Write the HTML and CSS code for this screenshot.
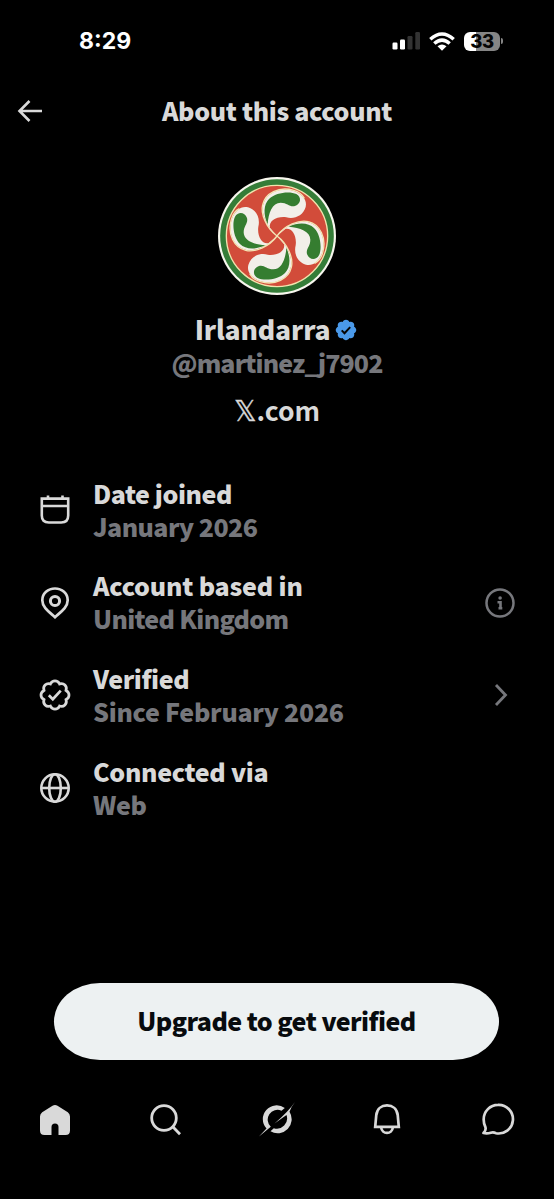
FILE: index.html
```html
<!DOCTYPE html>
<html lang="en">
<head>
<meta charset="utf-8">
<title>About this account</title>
<link rel="stylesheet" href="styles.css">
</head>
<body>
<div class="screen">
  <div class="status">
    <span class="time">8:29</span>
    <div class="indicators">
      <svg class="signal" width="28" height="18" viewBox="0 0 28 18"><rect x="0.500" y="10.500" width="5" height="7" rx="1.200" fill="#fff"/><rect x="8" y="7.500" width="5" height="10" rx="1.200" fill="#fff"/><rect x="15.500" y="4" width="5" height="13.500" rx="1.200" fill="#333"/><rect x="23.300" y="0" width="4.700" height="17.500" rx="1.200" fill="#333"/></svg>
      <svg class="wifi" width="26" height="19" viewBox="0 0 26 19"><g fill="none" stroke="#fff" stroke-width="3.500"><path d="M1.300 7.200Q13-3.200 24.700 7.200"/><path d="M5.300 11.500Q13 4.700 20.700 11.500"/></g><path d="M8.500 14.200Q13 10.700 17.500 14.200L13 18.700Z" fill="#fff"/></svg>
      <div class="battery"><span>33</span></div>
      <i class="cap"></i>
    </div>
  </div>
  <header class="topbar">
    <svg class="back" width="26" height="24" viewBox="0 0 26 24"><path d="M12.500 2L2.500 12l10 10M2.500 12H25" fill="none" stroke="#d9d9d9" stroke-width="2.600"/></svg>
    <h1 class="t-title">About this account</h1>
  </header>
  <section class="profile">
    <svg class="avatar" width="118" height="118" viewBox="33 30 354 354">
      <defs>
        <g id="comma">
          <path d="M210 207C180 184 162 140 168 115C175 80 215 58 260 71C288 82 301 100 296 120C288 147 262 157 238 151C210 147 184 162 189 182Z" fill="#f2efe9"/>
          <path d="M210 207C178 184 160 140 167 113C175 79 215 57 260 70C275 74 287 84 292 94" fill="none" stroke="#f3e6b5" stroke-width="4"/>
          <path d="M182 172C168 142 170 112 186 96C206 75 250 72 268 81C284 90 283 110 264 117C247 121 242 107 221 107C196 107 184 138 182 172Z" fill="#357d30"/>
        </g>
      </defs>
      <circle cx="210" cy="207" r="177" fill="#f8f7ee"/>
      <circle cx="210" cy="207" r="170.500" fill="#357d38"/>
      <circle cx="210" cy="207" r="152" fill="#d24c3a" stroke="#f3e3ad" stroke-width="4"/>
      <use href="#comma"/>
      <use href="#comma" transform="rotate(90 210 207)"/>
      <use href="#comma" transform="rotate(180 210 207)"/>
      <use href="#comma" transform="rotate(270 210 207)"/>
    </svg>
    <div class="name"><span class="t-name">Irlandarra</span>
      <svg width="22" height="22" viewBox="1 1 22 22"><path fill="#4a99e9" d="M22.250 12c0-1.430-.88-2.670-2.190-3.340.46-1.390.2-2.900-.81-3.910s-2.520-1.270-3.910-.81c-.66-1.310-1.910-2.190-3.340-2.190s-2.670.88-3.330 2.190c-1.400-.46-2.910-.2-3.920.81s-1.260 2.520-.8 3.910c-1.310.67-2.200 1.910-2.200 3.340s.89 2.670 2.200 3.340c-.46 1.390-.21 2.900.8 3.910s2.520 1.260 3.910.81c.67 1.310 1.910 2.190 3.340 2.190s2.680-.88 3.340-2.190c1.390.45 2.900.2 3.910-.81s1.270-2.520.81-3.910c1.310-.67 2.190-1.910 2.190-3.340z"/><path d="M7.700 12.400l2.800 2.800 5.700-6.100" fill="none" stroke="#050505" stroke-width="2"/></svg>
    </div>
    <div class="handle t-handle">@martinez_j7902</div>
    <div class="site"><span class="x">𝕏</span><span class="t-com">.com</span></div>
  </section>
  <section class="facts">
    <div class="fact">
      <svg class="icon" width="32" height="32" viewBox="0 0 32 32" fill="none" stroke="#d9d9d9" stroke-width="2.600"><path d="M2.800 4.600H29.200V21.500Q29.200 28.500 22.200 28.500H9.800Q2.800 28.500 2.800 21.500ZM2.800 12H29.200M9 1.500V5M23.500 1.500V5"/></svg>
      <div class="label"><b class="t-date">Date joined</b><span class="t-january">January 2026</span></div>
    </div>
    <div class="fact">
      <svg class="icon" width="32" height="32" viewBox="0 0 32 32" fill="none" stroke="#d9d9d9" stroke-width="2.700"><path d="M16 30.200C11 25.500 3.300 20.800 3.300 13.300C3.300 6.500 9 1.500 16 1.500S28.700 6.500 28.700 13.300C28.700 20.800 21 25.500 16 30.200Z"/><circle cx="16" cy="14" r="4.600" stroke-width="3"/></svg>
      <div class="label"><b class="t-based">Account based in</b><span class="t-uk">United Kingdom</span></div>
      <svg class="info" width="32" height="32" viewBox="0 0 32 32"><circle cx="16" cy="16" r="13.500" fill="none" stroke="#76777c" stroke-width="2.500"/><circle cx="16.100" cy="11" r="1.800" fill="#76777c"/><path d="M13.500 15.300H16.500V22M14.500 21.300H18.300" fill="none" stroke="#76777c" stroke-width="2.600"/></svg>
    </div>
    <div class="fact">
      <svg class="icon" width="32" height="32" viewBox="0.300 0.300 23.400 23.400" fill="none" stroke="#d9d9d9" stroke-width="2"><path d="M22.250 12c0-1.430-.88-2.670-2.190-3.340.46-1.390.2-2.900-.81-3.910s-2.520-1.270-3.910-.81c-.66-1.310-1.910-2.190-3.340-2.190s-2.670.88-3.330 2.190c-1.400-.46-2.910-.2-3.920.81s-1.260 2.520-.8 3.910c-1.310.67-2.200 1.910-2.200 3.340s.89 2.670 2.200 3.340c-.46 1.390-.21 2.900.8 3.910s2.520 1.260 3.910.81c.67 1.310 1.910 2.190 3.340 2.190s2.680-.88 3.340-2.190c1.390.45 2.900.2 3.910-.81s1.270-2.520.81-3.910c1.310-.67 2.190-1.910 2.190-3.340z"/><path d="M7.500 12.200l2.900 2.900 5.800-6.300"/></svg>
      <div class="label"><b class="t-verified">Verified</b><span class="t-since">Since February 2026</span></div>
      <svg class="chevron" width="16" height="24" viewBox="0 0 16 24"><path d="M3 2L12.500 12L3 22" fill="none" stroke="#76777c" stroke-width="2.800"/></svg>
    </div>
    <div class="fact">
      <svg class="icon" width="32" height="32" viewBox="0 0 32 32" fill="none" stroke="#d9d9d9" stroke-width="2.600"><circle cx="16" cy="16" r="13.700"/><ellipse cx="16" cy="16" rx="5.800" ry="13.700"/><path d="M2.300 16H29.700"/></svg>
      <div class="label"><b class="t-connected">Connected via</b><span class="t-web">Web</span></div>
    </div>
  </section>
  <button class="upgrade"><span class="t-upgrade">Upgrade to get verified</span></button>
  <nav class="tabs">
    <svg width="36" height="36" viewBox="0 0 36 36"><path d="M15.500 3.800Q18 2 20.500 3.800L30.800 10.300Q33 12 33 14.500V28.500Q33 33 28.500 33H21.500V25Q21.500 21.500 18 21.500T14.500 25V33H7.500Q3 33 3 28.500V14.500Q3 12 5.200 10.300Z" fill="#d9d9d9"/></svg>
    <svg width="36" height="36" viewBox="0 0 36 36" fill="none" stroke="#d9d9d9" stroke-width="2.800"><circle cx="16" cy="16" r="12.300"/><path d="M24.800 24.800L32 32.300"/></svg>
    <svg width="36" height="36" viewBox="0 0 36 36" fill="#d9d9d9"><path d="M25.800 6A13.800 13.800 0 0 0 7.500 26.500L0 34.500L11.800 24.800A9.800 9.800 0 0 1 22.500 8.700Z"/><path d="M36 0Q29 10 15.500 21.500L27.500 13A10.300 10.300 0 0 1 14.800 26.200L11.500 29.300A14 14 0 0 0 30.500 9.800Q32 5 36 0Z"/></svg>
    <svg width="36" height="36" viewBox="0 0 36 36" fill="none" stroke="#d9d9d9" stroke-width="2.700"><path d="M6.200 24.900L7.300 13C8 7 12.300 3.400 18 3.400S28 7 28.700 13L29.800 24.900Z"/><path d="M12.200 25.500C12.800 32.700 23.200 32.700 23.800 25.500"/></svg>
    <svg width="36" height="36" viewBox="0 0 36 36" fill="none" stroke="#d9d9d9" stroke-width="2.700" stroke-linejoin="round"><path d="M18 2.900A14.300 14.300 0 1 1 15.800 31.200Q13.500 29.800 10.800 30.700Q7 31.900 3.500 31Q6.300 28.300 5.400 25.200Q3.600 21.500 3.700 17.200A14.300 14.300 0 0 1 18 2.900Z"/></svg>
  </nav>
</div>
</body>
</html>
```
FILE: styles.css
```css
* { box-sizing: border-box; }
body { margin: 0; background: #000; color: #d9d9d9; font-family: "Noto Sans CJK SC", "Open Sans", sans-serif; font-weight: 900; }
svg { display: block; flex: none; }
.screen { width: 554px; height: 1199px; display: flex; flex-direction: column; overflow: hidden; background: #000; }
.status { height: 82px; padding: 0 51px 0 79px; display: flex; align-items: center; justify-content: space-between; }
.time { font: 700 23px/30px Inter, sans-serif; color: #fff; }
.indicators { display: flex; align-items: center; }
.wifi { margin-left: 9px; }
.battery { width: 36px; height: 19px; margin-left: 9px; border-radius: 6px; background: linear-gradient(90deg, #fff 12px, #858585 12px); color: #050505; text-align: center; font: 800 18.500px/19px Inter, sans-serif; letter-spacing: -0.500px; }
.cap { width: 2px; height: 6px; margin-left: 1px; border-radius: 0 2px 2px 0; background: #858585; }
.topbar { height: 58px; display: grid; grid-template-columns: 60px 1fr 60px; align-items: center; }
.back { margin-left: 17px; }
h1 { margin: 0; padding-bottom: 2px; text-align: center; font-size: 25px; line-height: 36px; font-weight: 900; white-space: nowrap; }
.profile { display: flex; flex-direction: column; align-items: center; padding-top: 37px; height: 337px; }
.name { display: flex; align-items: center; gap: 5px; margin-top: 17px; height: 36px; margin-right: 2px; font-size: 26.500px; line-height: 34px; }
.name span { margin-top: -3px; }
.handle { margin-top: -2px; height: 35px; font-size: 25px; line-height: 33px; color: #76777c; }
.site { display: flex; align-items: center; margin-top: 12px; height: 34px; font-size: 26.500px; line-height: 34px; font-weight: 700; }
.x { padding-top: 3px; font-family: "DejaVu Sans", sans-serif; font-weight: 400; font-size: 28px; -webkit-text-stroke: 0.400px #d9d9d9; }
.facts { display: flex; flex-direction: column; gap: 26.700px; height: 506px; padding: 0 39px; }
.fact { display: flex; align-items: center; height: 66px; }
.label { display: flex; flex-direction: column; align-items: flex-start; flex: 1; margin: -0.500px 0 0.500px 22px; font-size: 25px; line-height: 33px; white-space: nowrap; }
.label span { color: #76777c; }
.chevron { margin-right: 6px; }
.info { margin-right: -1px; }
.upgrade { width: 445px; height: 77px; flex: none; margin: 0 0 0 54px; padding: 0 0 4px; border: 0; border-radius: 46px / 38.500px; background: #edf1f2; color: #080b0e; font: inherit; font-size: 25px; line-height: 36px; }
.tabs { display: flex; justify-content: space-between; margin-top: 42px; padding: 0 38px 0 37px; }
.t-title { letter-spacing: -0.350px; }
.t-name { letter-spacing: -0.150px; }
.t-handle { letter-spacing: -0.880px; }
.t-date { letter-spacing: -0.450px; }
.t-based { letter-spacing: -0.200px; }
.t-verified { letter-spacing: -0.400px; }
.t-connected { letter-spacing: -0.330px; }
.t-january { letter-spacing: -0.570px; }
.t-uk { letter-spacing: -0.700px; }
.t-since { letter-spacing: -0.280px; }
.t-web { letter-spacing: -0.400px; }
.t-upgrade { letter-spacing: -0.560px; }
```
